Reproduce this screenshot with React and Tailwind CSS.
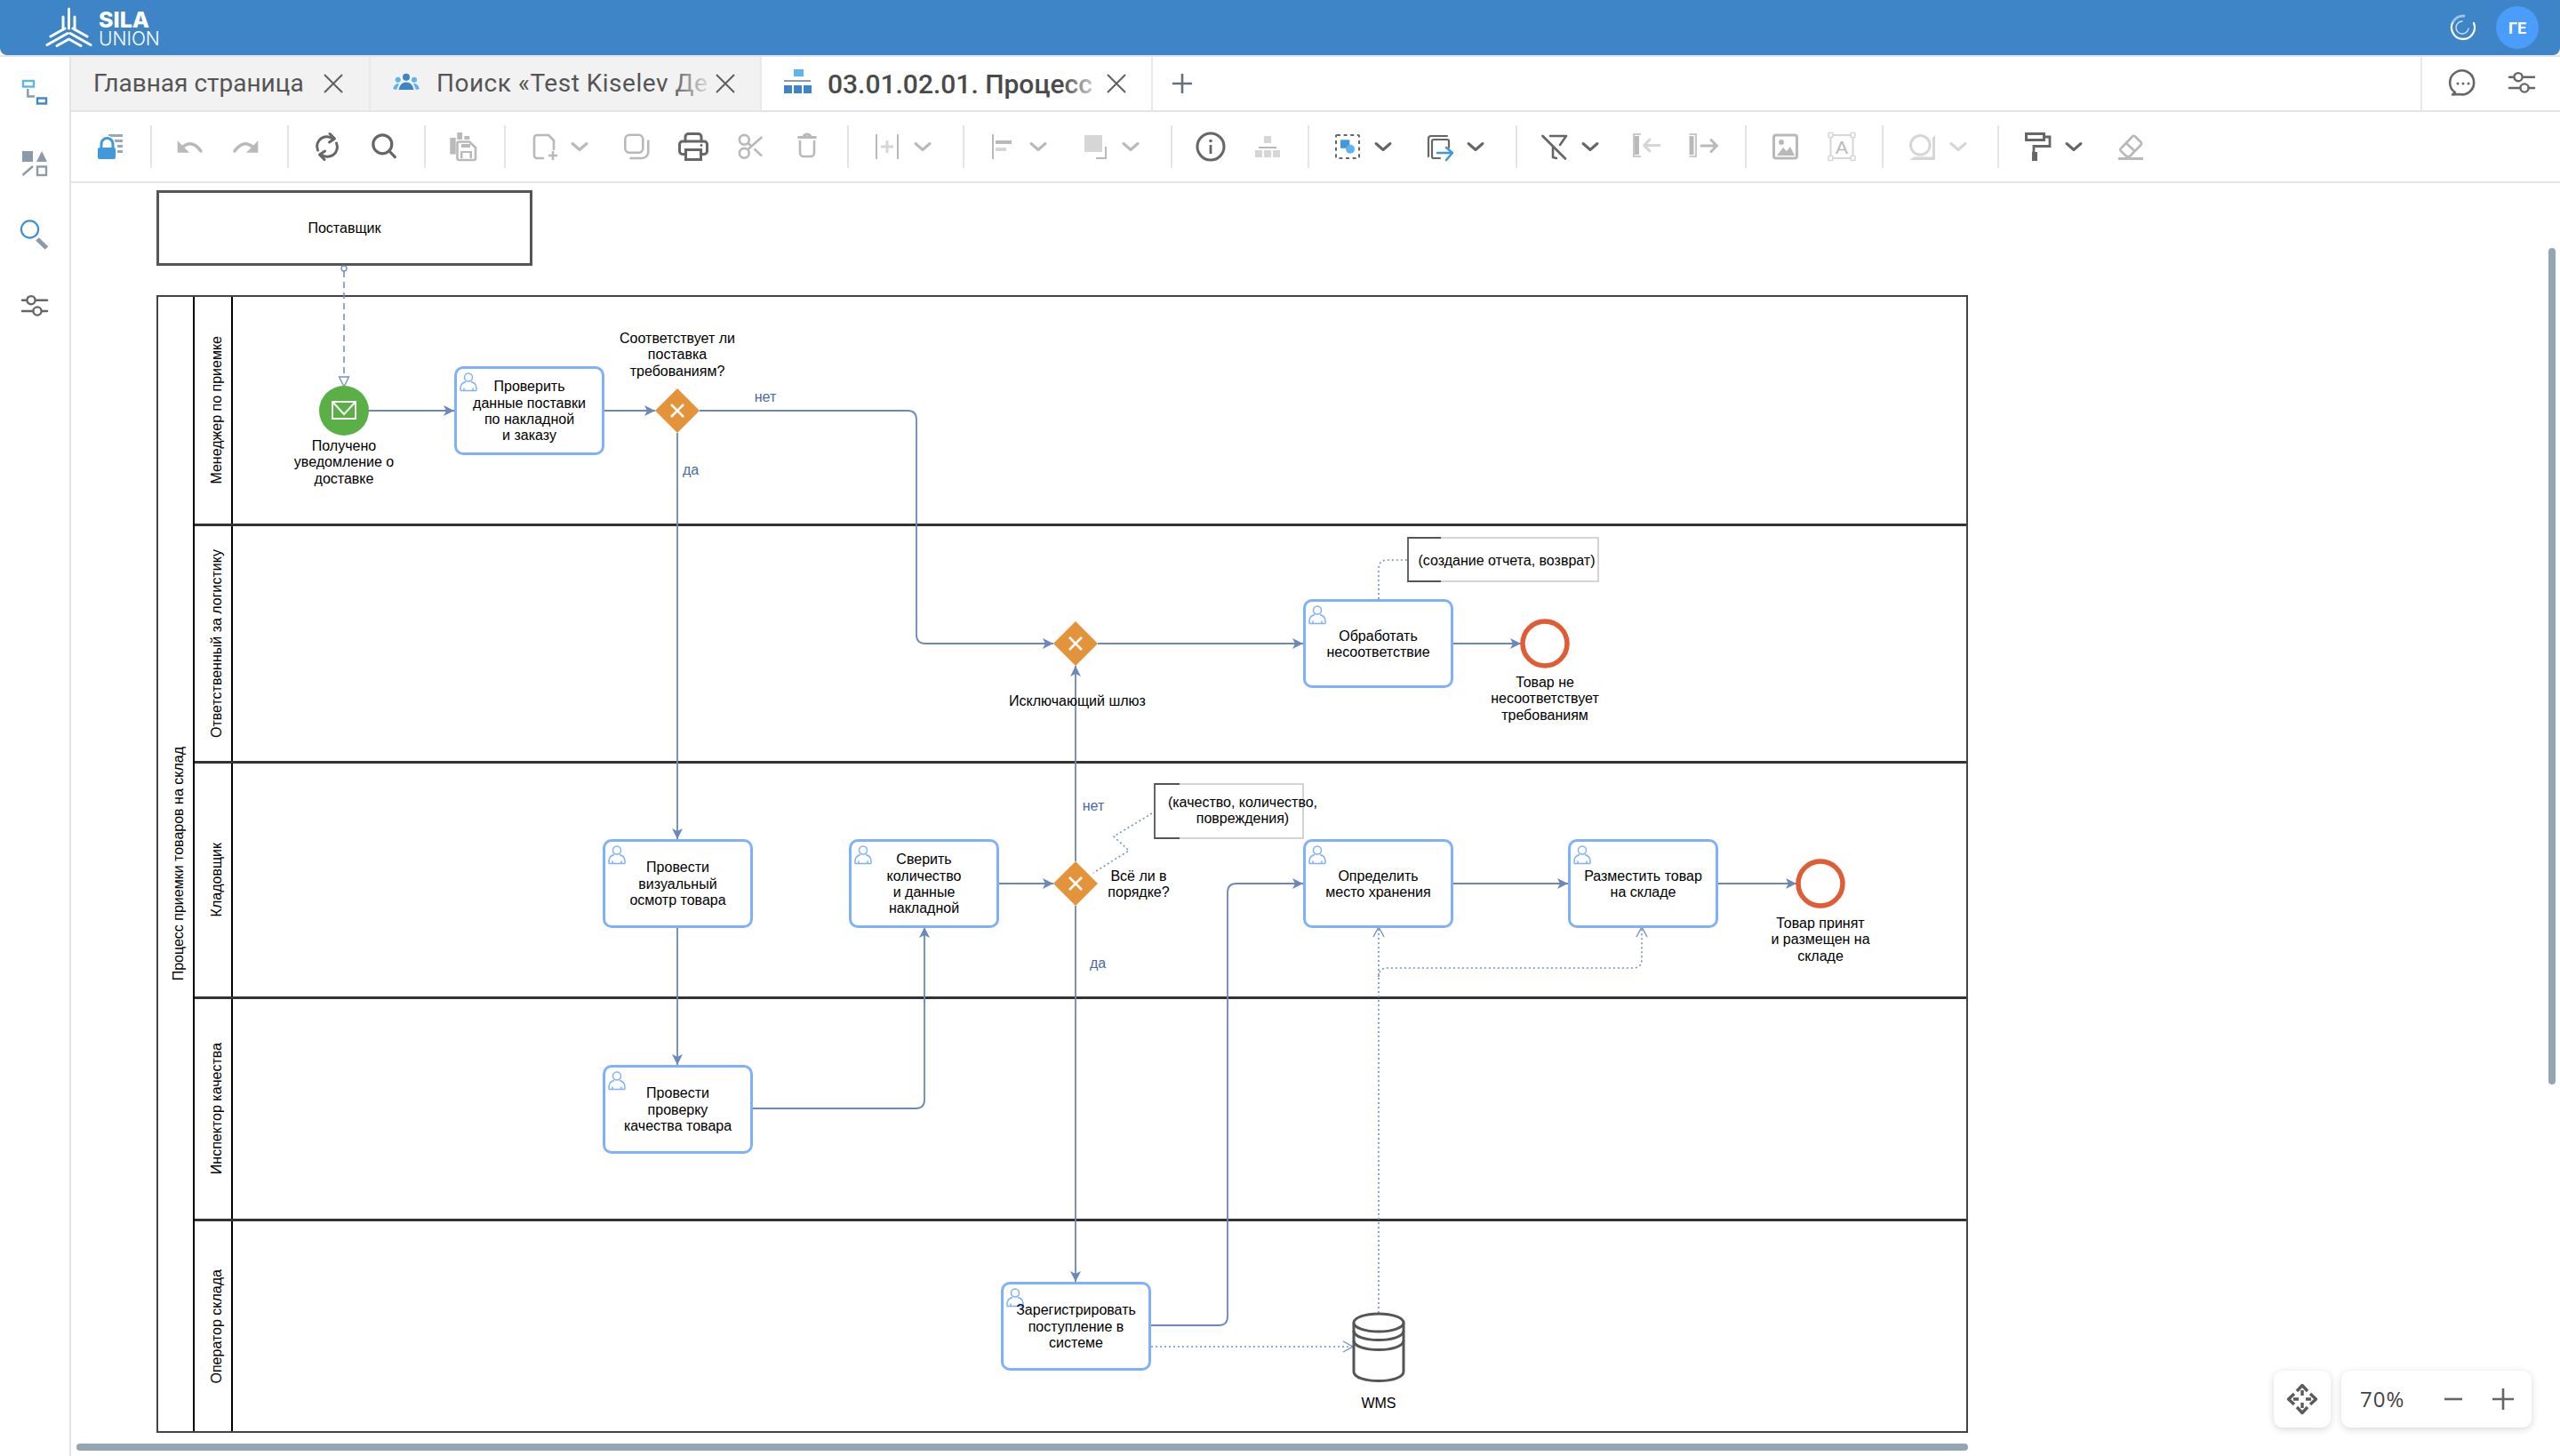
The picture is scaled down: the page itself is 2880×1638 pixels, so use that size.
import React from "react";

const GRAY = "#b9b9b9";
const DARK = "#666666";
const LIGHT = "#d6d6d6";
const BLUE = "#4298dd";
const SKY = "#5db4ee";
const FLOW = "#6b87bb";

function Ico({ children }) {
  return (
    <svg width="40" height="40" viewBox="0 0 40 40" fill="none" strokeLinecap="round" strokeLinejoin="round">
      {children}
    </svg>
  );
}

function Slot({ children }) {
  return <div className="flex h-10 w-16 shrink-0 items-center justify-center">{children}</div>;
}

function Chev({ color = GRAY }) {
  return (
    <div className="-ml-1 flex h-10 w-11 shrink-0 items-center justify-start">
      <svg width="24" height="24" viewBox="0 0 24 24" fill="none">
        <path d="M4 8.5 L12 15.5 L20 8.5" stroke={color} strokeWidth="3" strokeLinecap="round" strokeLinejoin="round" />
      </svg>
    </div>
  );
}

function Sep() {
  return <div className="h-[48px] w-[2px] shrink-0 bg-[#e4e4e4]" />;
}

const Lock = () => (
  <Ico>
    <g stroke="#94a8b8" strokeWidth="3">
      <path d="M18 7.5H34M22 13.5H34M28 19.5H34M28 25.5H34" strokeLinecap="butt" />
    </g>
    <path d="M10 21 V17 a6.5 6.5 0 0 1 13 0 V21" stroke="#fff" strokeWidth="6" />
    <path d="M10 21 V17 a6.5 6.5 0 0 1 13 0 V21" stroke={BLUE} strokeWidth="3" />
    <rect x="6" y="21" width="20" height="13" rx="2" fill={BLUE} />
  </Ico>
);
const Undo = () => (
  <Ico>
    <path d="M6.7 13.3 V26.7 H20 Z" fill={GRAY} />
    <path d="M12 21 Q23 11 33 25" stroke={GRAY} strokeWidth="3.5" />
  </Ico>
);
const Redo = () => (
  <Ico>
    <path d="M33.3 13.3 V26.7 H20 Z" fill={GRAY} />
    <path d="M28 21 Q17 11 7 25" stroke={GRAY} strokeWidth="3.5" />
  </Ico>
);
const Refresh = () => (
  <Ico>
    <path d="M9.5 24 A11 11 0 0 1 27 11.5" stroke={DARK} strokeWidth="3" />
    <path d="M30.5 16 A11 11 0 0 1 13 28.5" stroke={DARK} strokeWidth="3" />
    <path d="M23 5.5 L28.5 11 L22.5 15" stroke={DARK} strokeWidth="3" />
    <path d="M17 34.5 L11.5 29 L17.5 25" stroke={DARK} strokeWidth="3" />
  </Ico>
);
const Search = () => (
  <Ico>
    <circle cx="18.3" cy="17.3" r="10.5" stroke={DARK} strokeWidth="3.2" />
    <path d="M26 25 L32.3 31.7" stroke={DARK} strokeWidth="3.2" />
  </Ico>
);
const Paste = () => (
  <Ico>
    <rect x="5.3" y="10" width="6.4" height="18.5" fill={GRAY} />
    <rect x="13.3" y="4" width="5.8" height="8" fill={GRAY} />
    <rect x="21.3" y="8" width="6" height="4" fill={GRAY} />
    <path d="M15 14.5 H27 L34 21 V33 a2 2 0 0 1 -2 2 H15.5 a2 2 0 0 1 -2 -2 V16 a1.5 1.5 0 0 1 1.5 -1.5Z" stroke={GRAY} strokeWidth="2.6" />
    <rect x="18" y="17" width="10" height="4" fill={GRAY} />
    <rect x="17" y="25" width="13" height="8" fill={GRAY} />
    <rect x="19.5" y="27" width="8" height="6" fill="#fff" />
  </Ico>
);
const NewDoc = () => (
  <Ico>
    <path d="M19 33 H12 a3 3 0 0 1 -3 -3 V10 a3 3 0 0 1 3 -3 H25 L31 13 V23" stroke={GRAY} strokeWidth="2.6" />
    <path d="M30 25 V35 M25 30 H35" stroke={GRAY} strokeWidth="2.6" strokeLinecap="butt" />
  </Ico>
);
const Copy = () => (
  <Ico>
    <rect x="7.3" y="6.7" width="20" height="20" rx="5" stroke={GRAY} strokeWidth="2.6" />
    <path d="M33.3 13.5 V26 a7 7 0 0 1 -7 7 H13.5" stroke={GRAY} strokeWidth="2.6" />
  </Ico>
);
const Print = () => (
  <Ico>
    <path d="M11 14 V9 a3.5 3.5 0 0 1 3.5 -3.5 H25.5 a3.5 3.5 0 0 1 3.5 3.5 V14" stroke={DARK} strokeWidth="3" />
    <path d="M11 28.5 H8 a3.5 3.5 0 0 1 -3.5 -3.5 V17.5 a3.5 3.5 0 0 1 3.5 -3.5 H32 a3.5 3.5 0 0 1 3.5 3.5 V25 a3.5 3.5 0 0 1 -3.5 3.5 H29" stroke={DARK} strokeWidth="3" />
    <rect x="11.5" y="23.5" width="17" height="11" stroke={DARK} strokeWidth="3" strokeLinejoin="miter" />
    <circle cx="29" cy="18.5" r="1.4" fill={DARK} />
  </Ico>
);
const Cut = () => (
  <Ico>
    <circle cx="13.3" cy="12.3" r="5.4" stroke={GRAY} strokeWidth="2.6" />
    <circle cx="13.3" cy="27.3" r="5.4" stroke={GRAY} strokeWidth="2.6" />
    <path d="M17 23.5 L33.3 9 M17.5 16 L21.5 19.5 M24.5 22.5 L33 30.5" stroke={GRAY} strokeWidth="2.6" strokeLinecap="butt" />
  </Ico>
);
const Trash = () => (
  <Ico>
    <path d="M10.5 9.5 H29.5" stroke={GRAY} strokeWidth="2.8" />
    <path d="M16 8 Q20 4 24 8" stroke={GRAY} strokeWidth="2.6" />
    <path d="M12 14 V27 a4 4 0 0 0 4 4 H24 a4 4 0 0 0 4 -4 V14" stroke={GRAY} strokeWidth="2.6" />
  </Ico>
);
const LaneAdd = () => (
  <Ico>
    <path d="M8 6 V34 M32 6 V34" stroke={GRAY} strokeWidth="2" strokeLinecap="butt" />
    <path d="M20 13 V27 M13 20 H27" stroke={LIGHT} strokeWidth="3" strokeLinecap="butt" />
  </Ico>
);
const AlignLeft = () => (
  <Ico>
    <path d="M9 6 V34" stroke={GRAY} strokeWidth="2" strokeLinecap="butt" />
    <rect x="12" y="13" width="18" height="4" fill={GRAY} />
    <rect x="12" y="21" width="12" height="4" fill={LIGHT} />
  </Ico>
);
const Arrange = () => (
  <Ico>
    <rect x="8" y="7" width="20" height="19" fill={LIGHT} />
    <path d="M32 20 V33 H21" stroke={GRAY} strokeWidth="2" strokeLinecap="butt" strokeLinejoin="miter" />
  </Ico>
);
const Info = () => (
  <Ico>
    <circle cx="20" cy="20" r="15" stroke={DARK} strokeWidth="3" />
    <rect x="18.6" y="18" width="2.8" height="10" fill={DARK} />
    <circle cx="20" cy="13.5" r="1.8" fill={DARK} />
  </Ico>
);
const Tree = () => (
  <Ico>
    <rect x="16" y="8" width="8" height="8" fill={LIGHT} />
    <rect x="10" y="20" width="20" height="2" fill={GRAY} />
    <rect x="6" y="24" width="8" height="8" fill={LIGHT} />
    <rect x="16" y="24" width="8" height="8" fill={LIGHT} />
    <rect x="26" y="24" width="8" height="8" fill={LIGHT} />
  </Ico>
);
const SelectShapes = () => (
  <Ico>
    <rect x="7" y="7" width="26" height="26" rx="1" stroke={DARK} strokeWidth="2" strokeDasharray="4 3.6" strokeLinecap="butt" />
    <rect x="12" y="12.3" width="10.3" height="9.5" fill={BLUE} />
    <circle cx="23" cy="22.7" r="5" fill={SKY} />
  </Ico>
);
const MoveLayer = () => (
  <Ico>
    <path d="M7 31 V11 a3 3 0 0 1 3 -3 H28" stroke={DARK} strokeWidth="2.2" />
    <path d="M30 21 V14 a2 2 0 0 0 -2 -2 H13 a2 2 0 0 0 -2 2 V31 a2 2 0 0 0 2 2 H20" stroke={DARK} strokeWidth="2.2" />
    <path d="M17 27 H33 M27 21 L34 27 L27 35" stroke={BLUE} strokeWidth="2.6" />
  </Ico>
);
const FilterOff = () => (
  <Ico>
    <path d="M15 8 H33 L26 18" stroke={DARK} strokeWidth="2.6" />
    <path d="M18 21 V32 L22 33" stroke={DARK} strokeWidth="2.6" />
    <path d="M6.5 8 L32 33.5" stroke={DARK} strokeWidth="2.8" />
  </Ico>
);
const BarLeft = () => (
  <Ico>
    <path d="M13 6 H5 V31 H13" stroke={GRAY} strokeWidth="1.6" strokeLinecap="butt" strokeLinejoin="miter" />
    <rect x="6" y="8" width="5" height="21" fill={GRAY} />
    <path d="M34 18.5 H17 M23 12 L16.5 18.5 L23 25" stroke={LIGHT} strokeWidth="3" />
  </Ico>
);
const BarRight = () => (
  <Ico>
    <path d="M3.5 6 H11 V31 H3.5" stroke={GRAY} strokeWidth="1.6" strokeLinecap="butt" strokeLinejoin="miter" />
    <rect x="3.5" y="8" width="5" height="21" fill={GRAY} />
    <path d="M17 19 H34 M28 12.5 L34.5 19 L28 25.5" stroke={GRAY} strokeWidth="3" />
  </Ico>
);
const ImageIco = () => (
  <Ico>
    <rect x="7.5" y="7" width="26" height="26" rx="2.5" stroke={GRAY} strokeWidth="3" />
    <circle cx="16" cy="15" r="3" fill={GRAY} />
    <path d="M11 30 L18 21 L22 25 L26 20 L31 30 Z" fill={GRAY} />
  </Ico>
);
const TextFrame = () => (
  <Ico>
    <rect x="7.5" y="7" width="25" height="26" stroke={LIGHT} strokeWidth="2" />
    {[[5, 4.5], [30, 4.5], [5, 30.5], [30, 30.5]].map(([x, y]) => (
      <rect key={x + "-" + y} x={x} y={y} width="5" height="5" rx="1" fill="#fff" stroke={LIGHT} strokeWidth="1.6" />
    ))}
    <text x="20" y="27.5" textAnchor="middle" fontSize="21" fill={GRAY} fontFamily="Liberation Sans">A</text>
  </Ico>
);
const CircleMark = () => (
  <Ico>
    <circle cx="17.3" cy="18.3" r="10.8" stroke={LIGHT} strokeWidth="3" />
    <path d="M34 7 V35 H5 L10 31.5 H31 V10 Z" fill={LIGHT} />
  </Ico>
);
const Paint = () => (
  <Ico>
    <rect x="6.5" y="5.5" width="20" height="7" stroke={DARK} strokeWidth="3" strokeLinejoin="miter" />
    <path d="M27 9 H33 V19.5 H15 V27" stroke={DARK} strokeWidth="2.8" strokeLinecap="butt" strokeLinejoin="miter" />
    <rect x="13" y="26" width="6" height="10" fill={DARK} />
  </Ico>
);
const Eraser = () => (
  <Ico>
    <path d="M9 22 L22 8.5 a2 2 0 0 1 3 0 L31.5 15 a2 2 0 0 1 0 3 L19 31 H15.5 L9 25 a2 2 0 0 1 0 -3Z" stroke={GRAY} strokeWidth="2.6" />
    <path d="M15 16 L24.5 25" stroke={GRAY} strokeWidth="2.6" />
    <path d="M6 33.5 H34" stroke={GRAY} strokeWidth="3" strokeLinecap="butt" />
  </Ico>
);

const Sliders = () => (
  <svg width="40" height="40" viewBox="0 0 40 40" fill="none">
    <path d="M6 13.7 H34 M6 26 H34" stroke={DARK} strokeWidth="2.6" strokeLinecap="round" />
    <circle cx="16" cy="13.7" r="4.6" fill="#fff" stroke={DARK} strokeWidth="2.4" />
    <circle cx="23" cy="26" r="4.6" fill="#fff" stroke={DARK} strokeWidth="2.4" />
  </svg>
);

function Toolbar() {
  return (
    <div className="flex h-[80px] shrink-0 items-center border-b-2 border-[#e4e4e4]">
      <div className="flex w-[89px] shrink-0 items-center pl-3"><Slot><Lock /></Slot></div>
      <Sep />
      <div className="flex w-[152px] shrink-0 items-center pl-[10px]"><Slot><Undo /></Slot><Slot><Redo /></Slot></div>
      <Sep />
      <div className="flex w-[152px] shrink-0 items-center pl-[11px]"><Slot><Refresh /></Slot><Slot><Search /></Slot></div>
      <Sep />
      <div className="flex w-[88px] shrink-0 items-center pl-[10px]"><Slot><Paste /></Slot></div>
      <Sep />
      <div className="flex w-[384px] shrink-0 items-center pl-[11px]">
        <Slot><NewDoc /></Slot><Chev />
        <Slot><Copy /></Slot><Slot><Print /></Slot><Slot><Cut /></Slot><Slot><Trash /></Slot>
      </div>
      <Sep />
      <div className="flex w-[128px] shrink-0 items-center pl-[11px]"><Slot><LaneAdd /></Slot><Chev /></div>
      <Sep />
      <div className="flex w-[232px] shrink-0 items-center pl-[11px]">
        <Slot><AlignLeft /></Slot><Chev /><Slot><Arrange /></Slot><Chev />
      </div>
      <Sep />
      <div className="flex w-[152px] shrink-0 items-center pl-[11px]"><Slot><Info /></Slot><Slot><Tree /></Slot></div>
      <Sep />
      <div className="flex w-[232px] shrink-0 items-center pl-[11px]">
        <Slot><SelectShapes /></Slot><Chev color={DARK} /><Slot><MoveLayer /></Slot><Chev color={DARK} />
      </div>
      <Sep />
      <div className="flex w-[256px] shrink-0 items-center pl-[10px]">
        <Slot><FilterOff /></Slot><Chev color={DARK} /><Slot><BarLeft /></Slot><Slot><BarRight /></Slot>
      </div>
      <Sep />
      <div className="flex w-[152px] shrink-0 items-center pl-[11px]"><Slot><ImageIco /></Slot><Slot><TextFrame /></Slot></div>
      <Sep />
      <div className="flex w-[128px] shrink-0 items-center pl-3"><Slot><CircleMark /></Slot><Chev color={LIGHT} /></div>
      <Sep />
      <div className="flex items-center pl-3">
        <Slot><Paint /></Slot><Chev color={DARK} /><Slot><Eraser /></Slot>
      </div>
    </div>
  );
}

function CloseX() {
  return (
    <svg width="24" height="24" viewBox="0 0 24 24" fill="none" className="shrink-0">
      <path d="M2 2 L22 22 M22 2 L2 22" stroke="#5f5f5f" strokeWidth="2" />
    </svg>
  );
}

function Tabs() {
  return (
    <div className="flex h-[62px] shrink-0 border-b-2 border-[#e4e4e4] font-['Roboto',sans-serif] text-[28px] text-[#555]">
      <div className="flex w-[337px] shrink-0 items-center border-r-2 border-[#e8e8e8] bg-[#f2f2f2] pl-[25px] pr-[28px]">
        <span className="flex-1 whitespace-nowrap">Главная страница</span>
        <CloseX />
      </div>
      <div className="flex w-[440px] shrink-0 items-center border-r-2 border-[#e8e8e8] bg-[#f2f2f2] pl-[24px] pr-[28px]">
        <svg width="32" height="32" viewBox="0 0 32 32" className="mr-[18px] shrink-0">
          <circle cx="6.7" cy="11.7" r="3" fill={SKY} />
          <circle cx="25" cy="11.7" r="3" fill={SKY} />
          <path d="M1 22 Q3 15 8 16 L5 23 Z M31 22 Q29 15 24 16 L27 23 Z" fill={SKY} />
          <circle cx="16" cy="8.7" r="4" fill="#3d85c6" />
          <path d="M7.5 23 Q9 14.5 16 14.5 Q23 14.5 24.5 23 Z" fill="#3d85c6" />
        </svg>
        <div className="relative w-[313px] shrink-0 overflow-hidden whitespace-nowrap tracking-[0.5px]">
          Поиск «Test Kiselev Де
          <div className="absolute inset-y-0 right-0 w-[50px] bg-linear-to-l from-[#f2f2f2] to-transparent" />
        </div>
        <CloseX />
      </div>
      <div className="flex w-[440px] shrink-0 items-center border-r-2 border-[#e8e8e8] bg-white pl-[24px] pr-[28px] text-[30px] font-medium text-[#4a4a4a]">
        <svg width="32" height="32" viewBox="0 0 32 32" className="mr-[18px] shrink-0">
          <rect x="12" y="0" width="11" height="8" fill={SKY} />
          <rect x="1" y="12" width="30" height="2" fill="#8a9aa8" />
          <rect x="1" y="18" width="9" height="9" fill="#3d85c6" />
          <rect x="12" y="18" width="9" height="9" fill="#3d85c6" />
          <rect x="23" y="18" width="9" height="9" fill="#3d85c6" />
        </svg>
        <div className="relative w-[313px] shrink-0 overflow-hidden whitespace-nowrap">
          03.01.02.01. Процесс
          <div className="absolute inset-y-0 right-0 w-[50px] bg-linear-to-l from-white to-transparent" />
        </div>
        <CloseX />
      </div>
      <div className="flex w-[66px] shrink-0 items-center justify-center">
        <svg width="24" height="24" viewBox="0 0 24 24">
          <path d="M12 1 V23 M1 12 H23" stroke="#66707a" strokeWidth="2.6" />
        </svg>
      </div>
      <div className="flex-1" />
      <div className="flex w-[157px] shrink-0 items-center border-l-2 border-[#e8e8e8] pl-[26px] pb-[2px]">
        <svg width="40" height="40" viewBox="0 0 40 40" fill="none">
          <path d="M11 31 A13.5 13.5 0 1 1 15.5 33 L8 33.5 Z" stroke={DARK} strokeWidth="2.6" strokeLinejoin="round" />
          <circle cx="14" cy="21" r="1.5" fill={DARK} />
          <circle cx="20" cy="21" r="1.5" fill={DARK} />
          <circle cx="26" cy="21" r="1.5" fill={DARK} />
        </svg>
        <div className="ml-[26px]"><Sliders /></div>
      </div>
    </div>
  );
}

function Sidebar() {
  return (
    <div className="flex w-[80px] shrink-0 flex-col border-r-2 border-[#e4e4e4]">
      <div className="flex h-20 items-center justify-center">
        <svg width="40" height="40" viewBox="0 0 40 40" fill="none">
          <rect x="7" y="7" width="12" height="6.5" stroke={SKY} strokeWidth="2.4" />
          <path d="M12.3 16 V24.5 H20" stroke="#8a9aa8" strokeWidth="2.4" />
          <rect x="23" y="26.5" width="10" height="6" stroke="#3d85c6" strokeWidth="2.4" />
        </svg>
      </div>
      <div className="flex h-20 items-center justify-center">
        <svg width="40" height="40" viewBox="0 0 40 40" fill="none">
          <rect x="6" y="6" width="12" height="12" fill="#8a9aa8" />
          <path d="M28 6 L34 18 H22 Z" fill="#8a9aa8" />
          <path d="M6.5 33 L18 23" stroke="#8a9aa8" strokeWidth="2.4" />
          <rect x="23" y="23.5" width="10" height="9.5" stroke="#8a9aa8" strokeWidth="2.4" />
        </svg>
      </div>
      <div className="flex h-20 items-center justify-center">
        <svg width="40" height="40" viewBox="0 0 40 40" fill="none">
          <path d="M23 25 L33.5 35" stroke="#8a9aa8" strokeWidth="5" />
          <circle cx="14.5" cy="14" r="9.6" stroke="#3f8fd8" strokeWidth="2.2" />
        </svg>
      </div>
      <div className="flex h-20 items-center justify-center">
        <Sliders />
      </div>
    </div>
  );
}

function UserIcon() {
  return (
    <svg width="22" height="24" viewBox="0 0 22 24" fill="none" className="absolute left-[2px] top-[3px]">
      <circle cx="11" cy="6.5" r="4.5" stroke="#7fb0fb" strokeWidth="1.5" />
      <path d="M2 21.5 V18 Q2.5 13 8 11.5 M20 21.5 V18 Q19.5 13 14 11.5 M2 21.5 H20 M6 21.5 V18.5 M16 21.5 V18.5" stroke="#7fb0fb" strokeWidth="1.5" />
    </svg>
  );
}

const tasks = [
  ["left-[431px] top-[206px]", "Проверить\nданные поставки\nпо накладной\nи заказу"],
  ["left-[1386px] top-[468px]", "Обработать\nнесоответствие"],
  ["left-[598px] top-[738px]", "Провести\nвизуальный\nосмотр товара"],
  ["left-[875px] top-[738px]", "Сверить\nколичество\nи данные\nнакладной"],
  ["left-[1386px] top-[738px]", "Определить\nместо хранения"],
  ["left-[1684px] top-[738px]", "Разместить товар\nна складе"],
  ["left-[598px] top-[992px]", "Провести\nпроверку\nкачества товара"],
  ["left-[1046px] top-[1236px]", "Зарегистрировать\nпоступление в\nсистеме"],
];

const labels = [
  ["left-[602px] top-[166px]", "Соответствует ли\nпоставка\nтребованиям?"],
  ["left-[227px] top-[287px]", "Получено\nуведомление о\nдоставке"],
  ["left-[1052px] top-[574px]", "Исключающий шлюз"],
  ["left-[1578px] top-[553px]", "Товар не\nнесоответствует\nтребованиям"],
  ["left-[1121px] top-[771px]", "Всё ли в\nпорядке?"],
  ["left-[1888px] top-[824px]", "Товар принят\nи размещен на\nскладе"],
  ["left-[1391px] top-[1364px]", "WMS"],
  ["left-[1535px] top-[416px]", "(создание отчета, возврат)"],
  ["left-[1238px] top-[688px]", "(качество, количество,\nповреждения)"],
];

const flowLabels = [
  ["left-[701px] top-[232px]", "нет"],
  ["left-[617px] top-[314px]", "да"],
  ["left-[1070px] top-[692px]", "нет"],
  ["left-[1075px] top-[869px]", "да"],
];

const lanes = [
  ["h-[255px]", "Менеджер по приемке"],
  ["h-[267px]", "Ответственный за логистику"],
  ["h-[265px]", "Кладовщик"],
  ["h-[250px]", "Инспектор качества"],
  ["flex-1", "Оператор склада"],
];

function Pool() {
  return (
    <div className="absolute left-[96px] top-[126px] flex h-[1280px] w-[2038px] border-2 border-[#444] bg-white">
      <div className="flex w-[41px] shrink-0 items-center justify-center border-r-2 border-black pl-[7px]">
        <span className="rotate-180 whitespace-nowrap [writing-mode:vertical-rl]">Процесс приемки товаров на склад</span>
      </div>
      <div className="flex flex-1 flex-col">
        {lanes.map(([h, name], i) => (
          <div key={name} className={`flex ${h} ${i > 0 ? "border-t-[3px] border-[#333]" : ""}`}>
            <div className="flex w-[43px] shrink-0 items-center justify-center border-r-2 border-black pl-[9px]">
              <span className="rotate-180 whitespace-nowrap [writing-mode:vertical-rl]">{name}</span>
            </div>
            <div className="flex-1" />
          </div>
        ))}
      </div>
    </div>
  );
}

function Gateway({ x, y }) {
  return (
    <g>
      <polygon points={`${x},${y - 25} ${x + 25},${y} ${x},${y + 25} ${x - 25},${y}`} fill="#e3943a" />
      <path d={`M${x - 7} ${y - 7} L${x + 7} ${y + 7} M${x + 7} ${y - 7} L${x - 7} ${y + 7}`} stroke="#fff" strokeWidth="2.6" />
    </g>
  );
}

function Connectors() {
  const flow = { fill: "none", stroke: FLOW, strokeWidth: 1.8, markerEnd: "url(#arrow)" };
  const dotted = { fill: "none", stroke: "#7390c6", strokeWidth: 1.6, strokeDasharray: "2 3" };
  return (
    <svg className="absolute left-0 top-0" width="2800" height="1432" viewBox="80 206 2800 1432">
      <defs>
        <marker id="arrow" markerUnits="userSpaceOnUse" markerWidth="14" markerHeight="14" refX="12" refY="7" orient="auto">
          <path d="M0 1 L12 7 L0 13 L3 7 Z" fill={FLOW} />
        </marker>
        <marker id="open" markerUnits="userSpaceOnUse" markerWidth="14" markerHeight="14" refX="12" refY="7" orient="auto">
          <path d="M1 1 L12 7 L1 13" fill="none" stroke="#7390c6" strokeWidth="1.4" />
        </marker>
        <marker id="msg" markerUnits="userSpaceOnUse" markerWidth="14" markerHeight="14" refX="12" refY="7" orient="auto">
          <path d="M1 1.5 L12 7 L1 12.5 Z" fill="#fff" stroke="#7390c6" strokeWidth="1.4" />
        </marker>
      </defs>

      {/* message flow from the supplier */}
      <circle cx="387" cy="302" r="3" fill="#fff" stroke="#7390c6" strokeWidth="1.4" />
      <path d="M387 305 V435" fill="none" stroke="#7390c6" strokeWidth="1.6" strokeDasharray="7 5" markerEnd="url(#msg)" />

      {/* sequence flows */}
      <path d="M415 462 H511" {...flow} />
      <path d="M680 462 H737" {...flow} />
      <path d="M787 462 H1021 Q1031 462 1031 472 V714 Q1031 724 1041 724 H1185" {...flow} />
      <path d="M1235 724 H1466" {...flow} />
      <path d="M1635 724 H1711" {...flow} />
      <path d="M762 487 V944" {...flow} />
      <path d="M762 1043 V1198" {...flow} />
      <path d="M847 1247 H1030 Q1040 1247 1040 1237 V1043" {...flow} />
      <path d="M1124 994 H1185" {...flow} />
      <path d="M1210 969 V749" {...flow} />
      <path d="M1210 1019 V1442" {...flow} />
      <path d="M1295 1491 H1371 Q1381 1491 1381 1481 V1004 Q1381 994 1391 994 H1466" {...flow} />
      <path d="M1635 994 H1764" {...flow} />
      <path d="M1932 994 H2021" {...flow} />

      {/* associations */}
      <path d="M1551 674 V640 Q1551 630 1561 630 H1583" {...dotted} />
      <path d="M1296 915 L1253 941 L1270 957 L1230 982" {...dotted} />
      <path d="M1295 1515 H1522" {...dotted} markerEnd="url(#open)" />
      <path d="M1551 1477 V1043" {...dotted} markerEnd="url(#open)" />
      <path d="M1551 1099 Q1551 1089 1561 1089 H1837 Q1847 1089 1847 1079 V1043" {...dotted} markerEnd="url(#open)" />

      {/* annotations */}
      <path d="M1621 605 H1798 V654 H1621" fill="none" stroke="#c8c8c8" strokeWidth="1.6" />
      <path d="M1621 605 H1584 V654 H1621" fill="none" stroke="#555" strokeWidth="1.8" />
      <path d="M1327 882 H1466 V943 H1327" fill="none" stroke="#c8c8c8" strokeWidth="1.6" />
      <path d="M1327 882 H1299 V943 H1327" fill="none" stroke="#555" strokeWidth="1.8" />

      {/* start event */}
      <circle cx="387" cy="462" r="28" fill="#5aaf46" />
      <rect x="374" y="452" width="26" height="19" fill="none" stroke="#fff" strokeWidth="2" />
      <path d="M374 452 L387 466 L400 452" fill="none" stroke="#fff" strokeWidth="2" />

      <Gateway x={762} y={462} />
      <Gateway x={1210} y={724} />
      <Gateway x={1210} y={994} />

      <circle cx="1738" cy="724" r="25" fill="#fff" stroke="#e05c35" strokeWidth="5.5" />
      <circle cx="2048" cy="994" r="25" fill="#fff" stroke="#e05c35" strokeWidth="5.5" />

      {/* WMS */}
      <g fill="#fff" stroke="#555" strokeWidth="3">
        <path d="M1523 1488 V1543 C1523 1557 1579 1557 1579 1543 V1488" />
        <ellipse cx="1551" cy="1488" rx="28" ry="10" />
        <path d="M1523 1497 C1523 1511 1579 1511 1579 1497 M1523 1508 C1523 1522 1579 1522 1579 1508" fill="none" />
      </g>
    </svg>
  );
}

function Canvas() {
  return (
    <div className="relative flex-1 overflow-hidden bg-white font-['Liberation_Sans',sans-serif] text-[16px] leading-[18.4px] text-black">
      <div className="absolute left-[96px] top-[8px] flex h-[85px] w-[423px] items-center justify-center border-[3px] border-[#555] pt-[2px]">
        Поставщик
      </div>
      <Pool />
      <Connectors />
      {tasks.map(([pos, text]) => (
        <div
          key={text}
          className={`absolute ${pos} flex h-[100px] w-[169px] items-center justify-center whitespace-pre rounded-[10px] border-[3px] border-[#7fb0fb] bg-white pt-[2px] text-center`}
        >
          <UserIcon />
          <span className="relative">{text}</span>
        </div>
      ))}
      {labels.map(([pos, text]) => (
        <div key={text} className={`absolute ${pos} w-[160px] whitespace-pre text-center`}>
          <span className="-mx-10 block">{text}</span>
        </div>
      ))}
      {flowLabels.map(([pos, text]) => (
        <div key={pos} className={`absolute ${pos} w-[160px] text-center text-[#4a6aa5]`}>{text}</div>
      ))}

      {/* scrollbars */}
      <div className="absolute bottom-[6px] left-[6px] h-[8px] w-[2128px] rounded-full bg-[#94a6b4]" />
      <div className="absolute right-[5px] top-[73px] h-[941px] w-[8px] rounded-full bg-[#94a6b4]" />

      {/* zoom controls */}
      <div className="absolute bottom-[32px] right-[32px] flex gap-3">
        <div className="flex h-16 w-16 items-center justify-center rounded-[10px] bg-white shadow-[0_2px_8px_rgba(0,0,0,0.16)]">
          <svg width="36" height="36" viewBox="0 0 36 36" fill="none">
            <g stroke="#5a5a5a" strokeWidth="3.4">
              <path d="M18 8 V14 M18 22 V28 M8 18 H14 M22 18 H28" />
              <path d="M12 9 L18 2.5 L24 9 M12 27 L18 33.5 L24 27 M9 12 L2.5 18 L9 24 M27 12 L33.5 18 L27 24" strokeLinejoin="round" />
            </g>
          </svg>
        </div>
        <div className="flex h-16 w-[214px] items-center rounded-[10px] bg-white pl-[21px] font-['Open_Sans',sans-serif] text-[24px] tracking-[1px] text-[#444] shadow-[0_2px_8px_rgba(0,0,0,0.16)]">
          <span className="w-[95px]">70%</span>
          <svg width="20" height="4" viewBox="0 0 20 4"><rect width="20" height="2.6" y="0.7" fill="#666" /></svg>
          <svg width="24" height="24" viewBox="0 0 24 24" className="ml-[34px]">
            <path d="M12 0 V24 M0 12 H24" stroke="#666" strokeWidth="2.6" />
          </svg>
        </div>
      </div>
    </div>
  );
}

function Header() {
  return (
    <div className="flex h-[62px] shrink-0 items-center rounded-b-lg bg-[#3d85c6] pl-[51px] pr-[24px] text-white">
      <svg width="54" height="48" viewBox="51 8 54 48" fill="none" className="shrink-0">
        <g stroke="#fff" strokeWidth="3" strokeLinecap="round" strokeLinejoin="round">
          <path d="M77.5 11 V33 M71 20 V34 M84 20 V34" />
          <path d="M57 42 L73 33 M53 51.5 L76 38.5 M98 42 L82 33 M102 51.5 L79 38.5" />
          <path d="M64 52.5 L77.5 45 L91 52.5" />
        </g>
      </svg>
      <div className="ml-[6px] flex flex-col pt-1">
        <span className="font-['Inter',sans-serif] text-[25px] font-extrabold leading-[22px]">SILA</span>
        <span className="font-['Inter',sans-serif] text-[21px] font-light leading-[22px]">UNION</span>
      </div>
      <div className="flex-1" />
      <svg width="32" height="32" viewBox="0 0 32 32" fill="none" className="mr-[21px]">
        <path d="M28 11 A13 13 0 1 1 5 9" stroke="#fff" strokeWidth="2.2" strokeLinecap="round" />
        <path d="M5 9 A13 13 0 0 1 17 3" stroke="#9cc4ea" strokeWidth="3" strokeLinecap="round" />
        <path d="M22 17 A7 7 0 1 1 15 9" stroke="#cfe2f5" strokeWidth="1.4" strokeLinecap="round" />
      </svg>
      <div className="flex h-12 w-12 items-center justify-center rounded-full bg-[#4b9dfb] font-['Roboto',sans-serif] text-[18px] font-bold">ГЕ</div>
    </div>
  );
}

export default function App() {
  return (
    <div className="flex h-[1638px] w-[2880px] flex-col overflow-hidden bg-white">
      <Header />
      <div className="h-[2px] shrink-0 bg-[#e4e4e4]" />
      <div className="flex min-h-0 flex-1">
        <Sidebar />
        <div className="flex min-w-0 flex-1 flex-col">
          <Tabs />
          <Toolbar />
          <Canvas />
        </div>
      </div>
    </div>
  );
}
